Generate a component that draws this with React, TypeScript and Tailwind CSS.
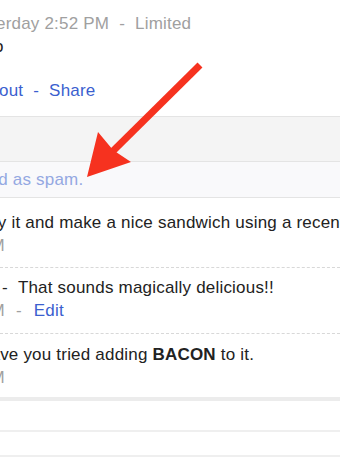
import React from 'react'

const Sep = () => <span className="px-[10px]">-</span>

function Arrow() {
  return (
    <svg className="absolute inset-0 pointer-events-none" width="340" height="460" viewBox="0 0 340 460">
      <line x1="200" y1="65" x2="112" y2="152" stroke="#f6321f" strokeWidth="7" />
      <polygon points="87,177 98,132 113,150 131,162" fill="#f6321f" />
    </svg>
  )
}

export default function App() {
  return (
    <div className="relative w-[340px] h-[460px] overflow-hidden bg-white font-['Liberation_Sans',Arial,sans-serif] text-[17px] leading-[23px] tracking-[0.2px] whitespace-nowrap">
      {/* post header */}
      <div className="pt-[12px] pb-[14px]">
        <div className="text-[#a0a0a0] -ml-[4px]">
          erday 2:52 PM<Sep />Limited
        </div>
        <div className="text-[#222] -ml-[6px]">o</div>
        <div className="mt-[21px] text-[#3b5fcf] -ml-px">
          out<Sep />Share
        </div>
      </div>

      <div className="h-[46px] bg-[#f4f4f4] border-y border-[#e4e4e4]" />

      <div className="pt-[6px] pb-[6px] bg-[#f9f9fb] border-b border-[#e4e4e4] text-[#94a8e2]">
        <div className="-ml-[50px]">Marked as spam.</div>
      </div>

      {/* comments */}
      <div className="pt-[13px] pb-[10px] border-b border-dashed border-[#d8d8d8]">
        <div className="text-[#222] -ml-[18px]">Try it and make a nice sandwich using a recent</div>
        <div className="text-[#a0a0a0] -ml-[21px]">PM</div>
      </div>

      <div className="pt-[8px] pb-[11px] border-b border-dashed border-[#d8d8d8]">
        <div className="text-[#222] -ml-[8px]">
          <Sep />That sounds magically delicious!!
        </div>
        <div className="-ml-[21px]">
          <span className="text-[#a0a0a0]">PM</span>
          <span className="text-[#a0a0a0] pl-[11px] pr-[12px]">-</span>
          <span className="text-[#3b5fcf]">Edit</span>
        </div>
      </div>

      <div className="pt-[9px] pb-[8px]">
        <div className="text-[#222] -ml-[22px]">
          Have you tried adding <b>BACON</b> to it.
        </div>
        <div className="text-[#a0a0a0] -ml-[21px]">PM</div>
      </div>

      <div className="h-[4px] bg-[#ececec]" />
      <div className="h-[29px]" />
      <div className="h-[2px] bg-[#efefef]" />
      <div className="h-[23px]" />
      <div className="h-[2px] bg-[#efefef]" />

      <Arrow />
    </div>
  )
}
